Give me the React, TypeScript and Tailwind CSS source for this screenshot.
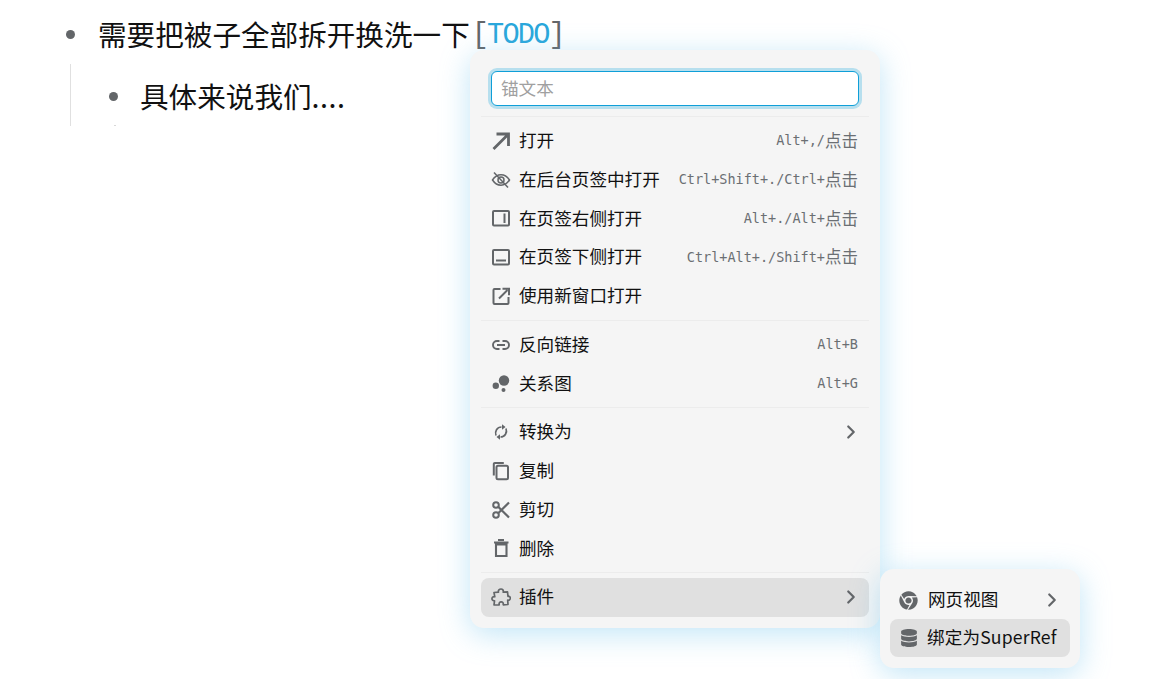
import React from 'react';
import { ChevronRight } from 'lucide-react';
import { FaChrome, FaDatabase } from 'react-icons/fa';

const cjk = "font-['Noto_Sans_CJK_SC','Liberation_Sans',sans-serif]";
const mono = "font-['DejaVu_Sans_Mono','Noto_Sans_CJK_SC',monospace]";

const Svg = ({ children }: { children: React.ReactNode }) => (
  <svg viewBox="0 0 20 20" className="w-5 h-5" fill="none" stroke="#636669" strokeWidth="2">
    {children}
  </svg>
);

interface MenuRow {
  label: string;
  icon: React.ReactNode;
  shortcut?: string;
  arrow?: boolean;
  active?: boolean;
}

const openRows: MenuRow[] = [
  {
    label: '打开',
    shortcut: 'Alt+,/',
    icon: (
      <Svg>
        <path d="M2.500 18 16.500 4M5.500 3h12v12" strokeWidth="2.800" />
      </Svg>
    ),
  },
  {
    label: '在后台页签中打开',
    shortcut: 'Ctrl+Shift+./Ctrl+',
    icon: (
      <Svg>
        <path d="M1.500 10C4 6.200 7 4.800 10 4.800s6 1.400 8.500 5.200C16 13.800 13 15.200 10 15.200S4 13.800 1.500 10Z" strokeWidth="1.500" />
        <circle cx="10" cy="10" r="3" strokeWidth="1.500" />
        <path d="M3 2.500 17 17.500" strokeWidth="1.500" />
      </Svg>
    ),
  },
  {
    label: '在页签右侧打开',
    shortcut: 'Alt+./Alt+',
    icon: (
      <Svg>
        <rect x="2" y="3" width="16" height="14.500" rx="1" />
        <path d="M13.500 5.500v9.500" />
      </Svg>
    ),
  },
  {
    label: '在页签下侧打开',
    shortcut: 'Ctrl+Alt+./Shift+',
    icon: (
      <Svg>
        <rect x="2" y="3" width="16" height="14.500" rx="1" />
        <path d="M5 13.500h10" />
      </Svg>
    ),
  },
  {
    label: '使用新窗口打开',
    icon: (
      <Svg>
        <path d="M9.500 3H3.500a1 1 0 0 0-1 1v13a1 1 0 0 0 1 1h13a1 1 0 0 0 1-1V11" />
        <path d="M8 12.500 16.500 4M11.500 2.800h6.500v6.500" />
      </Svg>
    ),
  },
];

const linkRows: MenuRow[] = [
  {
    label: '反向链接',
    shortcut: 'Alt+B',
    icon: (
      <Svg>
        <path d="M8.500 6H6a4 4 0 0 0 0 8h2.500M11.500 6H14a4 4 0 0 1 0 8h-2.500M6 10h8" strokeWidth="1.900" />
      </Svg>
    ),
  },
  {
    label: '关系图',
    shortcut: 'Alt+G',
    icon: (
      <svg viewBox="0 0 20 20" className="w-5 h-5" fill="#636669">
        <circle cx="13" cy="7.500" r="5.200" />
        <circle cx="4.800" cy="12.800" r="3.200" />
        <circle cx="12.500" cy="17" r="2" />
      </svg>
    ),
  },
];

const editRows: MenuRow[] = [
  {
    label: '转换为',
    arrow: true,
    icon: (
      <Svg>
        <path d="M5 13.500C3.500 9.500 6 5 10.500 5" strokeWidth="1.700" />
        <path d="M15 6.500C16.500 10.500 14 15 9.500 15" strokeWidth="1.700" />
        <path d="M11 2.200v5.600L14.500 5zM9 12.200v5.600L5.500 15z" fill="#636669" stroke="none" />
      </Svg>
    ),
  },
  {
    label: '复制',
    icon: (
      <Svg>
        <rect x="5.500" y="4.800" width="11.500" height="13.500" rx="1.500" />
        <path d="M2.800 14.500V3a1 1 0 0 1 1-1h9" />
      </Svg>
    ),
  },
  {
    label: '剪切',
    icon: (
      <Svg>
        <circle cx="5" cy="5" r="2.800" />
        <circle cx="5" cy="15" r="2.800" />
        <path d="M7.200 6.800 18 17.500M7.200 13.200 18 2.500" strokeWidth="2.200" />
      </Svg>
    ),
  },
  {
    label: '删除',
    icon: (
      <Svg>
        <path d="M5 6.500h10.500V18H5zM3 4.500h14.500M7 2h6" strokeWidth="2.100" />
      </Svg>
    ),
  },
];

const Row = ({ row }: { row: MenuRow }) => (
  <div className={`flex items-center h-[38.75px] pl-[10px] pr-[11px] rounded-lg ${row.active ? 'bg-[#e0e0e0]' : ''}`}>
    <span className="w-5 h-5 flex items-center justify-center shrink-0">{row.icon}</span>
    <span className="ml-[8px] pb-[1px] text-[17.600px] text-[#111] whitespace-nowrap">{row.label}</span>
    {row.shortcut && (
      <span className={`ml-auto flex items-center pb-[1px] text-[13.500px] text-[#6b6f73] whitespace-nowrap ${mono}`}>
        {row.shortcut}
        {row.shortcut.endsWith('+') || row.shortcut.endsWith('/') ? (
          <span className={`text-[16.500px] ${cjk}`}>点击</span>
        ) : null}
      </span>
    )}
    {row.arrow && <ChevronRight size={22} color="#636669" strokeWidth={2.400} className="ml-auto -mr-[4px]" />}
  </div>
);

const Divider = ({ className = '' }: { className?: string }) => (
  <div className={`h-px bg-[#ececec] ${className}`} />
);

export default function App() {
  return (
    <div className={`relative w-[1151px] h-[679px] overflow-hidden bg-white ${cjk}`}>
      <div className="pt-[13px] pl-[66px]">
        <div className="flex items-center h-[42px]">
          <span className="w-[9px] h-[9px] rounded-full bg-[#636669]" />
          <span className="ml-[23px] text-[28.600px] text-[#111] whitespace-nowrap">需要把被子全部拆开换洗一下</span>
          <span className="ml-[2px] pt-[5px] text-[28.600px] tracking-[-1.800px] text-[#636669] whitespace-nowrap font-['Liberation_Mono',monospace]">
            [<span className="text-[#2aa7db]">TODO</span>]
          </span>
        </div>
        <div className="relative ml-[4px] mt-[9px] h-[62px] border-l border-[#e0e0e0] pl-[38px] pt-[11px]">
          <div className="flex items-center h-[42px]">
            <span className="w-[9px] h-[9px] rounded-full bg-[#636669]" />
            <span className="ml-[22px] text-[28.600px] text-[#111] whitespace-nowrap">
              具体来说我们<span className="tracking-[0.500px]">....</span>
            </span>
          </div>
          <span className="absolute left-[43px] bottom-0 w-[2px] h-px bg-[#d8d8d8]" />
        </div>
      </div>

      <div className="absolute left-[470px] top-[50px] w-[410px] h-[578px] rounded-[14px] bg-[#f5f5f5] px-[11px] pt-[21px] shadow-[0_6px_30px_rgba(100,190,235,0.4)]">
        <div className="mx-[10px] h-[35px] rounded-md bg-white border border-[#0f9fd8] ring-[3px] ring-[#b7dfee] flex items-center px-[9px] text-[17.600px] text-[#a0a0a0]">
          <span className="pb-[1px]">锚文本</span>
        </div>
        <Divider className="mt-[10px] mb-[4.500px]" />
        {openRows.map((row) => (
          <Row key={row.label} row={row} />
        ))}
        <Divider className="mt-[4.500px] mb-[4.500px]" />
        {linkRows.map((row) => (
          <Row key={row.label} row={row} />
        ))}
        <Divider className="mt-[4.500px] mb-[4.500px]" />
        {editRows.map((row) => (
          <Row key={row.label} row={row} />
        ))}
        <Divider className="mt-[4.500px] mb-[4.500px]" />
        <Row
          row={{
            label: '插件',
            arrow: true,
            active: true,
            icon: (
              <Svg>
                <path
                  d="M7.500 5.200C6.800 3 8.500 2 10 2s2.800 1.200 2.200 3.200L16.500 4.800 17 9.500c2-.5 2.500 1 2.200 2.300-.3 1-1.200 1.800-2.500 1.300l.3 4.400-4.800.3c.5-2-.8-3-2-3s-2.500 1-2 3L3 18l.5-4.200C1.500 14 .8 12.500 1 11.300c.2-1 1.300-2 2.800-1.500L3 5.500z"
                  strokeWidth="1.700"
                  strokeLinejoin="round"
                />
              </Svg>
            ),
          }}
        />
      </div>

      <div className="absolute left-[880px] top-[569px] w-[200px] h-[99px] rounded-[14px] bg-[#f5f5f5] px-[10px] pt-[12px] shadow-[0_6px_30px_rgba(100,190,235,0.4)]">
        <div className="flex items-center h-[38px] pl-[9px] pr-[7px]">
          <FaChrome size={19} color="#636669" />
          <span className="ml-[10px] pb-[2px] text-[17.600px] text-[#111] whitespace-nowrap">网页视图</span>
          <ChevronRight size={22} color="#636669" strokeWidth={2.400} className="ml-auto" />
        </div>
        <div className="flex items-center h-[38px] pl-[10px] rounded-lg bg-[#e0e0e0]">
          <FaDatabase size={18} color="#636669" />
          <span className="ml-[9px] pb-[2px] text-[17.600px] tracking-[0.150px] text-[#111] whitespace-nowrap">绑定为SuperRef</span>
        </div>
      </div>
    </div>
  );
}
